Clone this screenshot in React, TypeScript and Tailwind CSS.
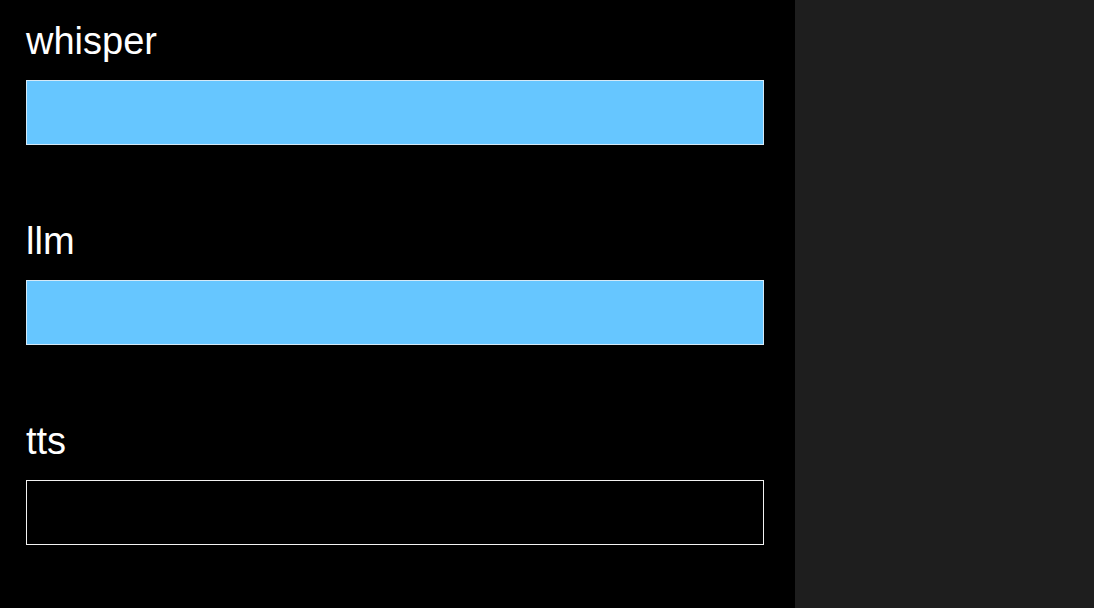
import React from 'react'

interface Channel {
  name: string
  active: boolean
}

const channels: Channel[] = [
  { name: 'whisper', active: true },
  { name: 'llm', active: true },
  { name: 'tts', active: false },
]

export default function App() {
  return (
    <div className="flex h-[608px] w-full overflow-hidden bg-[#1e1e1e]" style={{ fontFamily: '"Liberation Sans", Arial, sans-serif' }}>
      {/* status column */}
      <div className="flex h-full w-[795px] flex-col gap-[74px] bg-black pl-[26px] pr-[31px] pt-[19px]">
        {channels.map((c) => (
          <div key={c.name} className="flex flex-col">
            <div className="text-[38px] leading-[44px] text-white">{c.name}</div>
            <div
              className={`mt-[17px] h-[65px] w-[738px] border ${
                c.active ? 'border-[#d4e9f7] bg-[#66c6ff]' : 'border-[#f2f2f2] bg-black'
              }`}
            />
          </div>
        ))}
      </div>
      <div className="flex-1" />
    </div>
  )
}
